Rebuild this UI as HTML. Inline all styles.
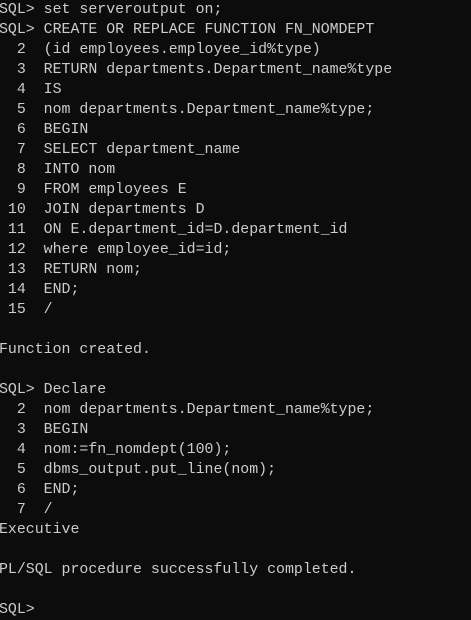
<html><head><style>
body{margin:0;background:#0c0c0c;width:471px;height:605px;overflow:hidden}
pre{margin:0;position:absolute;left:-1px;top:0px;font-family:"Liberation Mono",monospace;font-size:14.9px;line-height:20px;color:#cccccc}
</style></head><body><pre>SQL> set serveroutput on;
SQL> CREATE OR REPLACE FUNCTION FN_NOMDEPT
  2  (id employees.employee_id%type)
  3  RETURN departments.Department_name%type
  4  IS
  5  nom departments.Department_name%type;
  6  BEGIN
  7  SELECT department_name
  8  INTO nom
  9  FROM employees E
 10  JOIN departments D
 11  ON E.department_id=D.department_id
 12  where employee_id=id;
 13  RETURN nom;
 14  END;
 15  /

Function created.

SQL> Declare
  2  nom departments.Department_name%type;
  3  BEGIN
  4  nom:=fn_nomdept(100);
  5  dbms_output.put_line(nom);
  6  END;
  7  /
Executive

PL/SQL procedure successfully completed.

SQL></pre></body></html>
